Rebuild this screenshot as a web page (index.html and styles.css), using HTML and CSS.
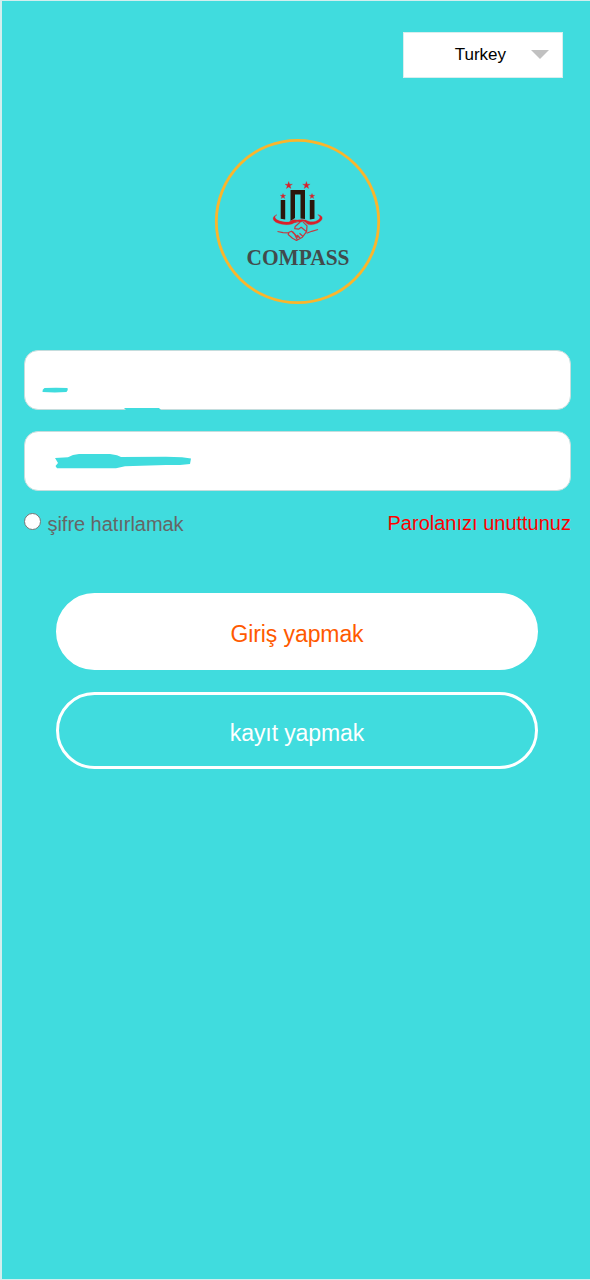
FILE: index.html
```html
<!DOCTYPE html>
<html lang="tr">
<head>
<meta charset="utf-8">
<meta name="viewport" content="width=device-width, initial-scale=1">
<title>Compass</title>
<link rel="stylesheet" href="styles.css">
</head>
<body>
<main class="page">
  <header class="top">
    <button class="language" type="button">
      <span>Turkey</span>
      <svg class="caret" viewBox="0 0 18 9"><path d="M0 0H18L9 9Z"/></svg>
    </button>
  </header>

  <svg class="logo" viewBox="214 138 167 167" role="img" aria-label="Compass">
    <circle class="ring" cx="297.5" cy="221.5" r="81.2"/>
    <g class="towers">
      <path d="M290.5 190H305V219L300.5 218.5V194.5H295V218L290.5 221Z"/>
      <path d="M280.7 200H285.2V219.5L280.7 218.8Z"/>
      <path d="M309.8 200H314.5V218.8L309.8 219.6Z"/>
    </g>
    <g class="red">
      <path d="M288.7 181.5L289.6 184.2H292.4L290.1 185.8L291 188.5L288.7 186.9L286.4 188.5L287.3 185.8L285 184.2H287.8Z"/>
      <path d="M306.4 181.5L307.3 184.2H310.1L307.8 185.8L308.7 188.5L306.4 186.9L304.1 188.5L305 185.8L302.7 184.2H305.5Z"/>
      <path d="M283 193.5L283.7 195.3H285.7L284.1 196.5L284.7 198.5L283 197.3L281.3 198.5L281.9 196.5L280.3 195.3H282.3Z"/>
      <path d="M312 193.5L312.7 195.3H314.7L313.1 196.5L313.7 198.5L312 197.3L310.3 198.5L310.9 196.5L309.3 195.3H311.3Z"/>
      <path d="M277 214.7C271.5 216.3 272 220.8 277.8 223.1C282.5 225 288.4 225.1 292 224L297.3 221.3L300.2 222.3L303.5 221.2C306 221.8 306 223.7 309 224.6C314 225.3 319.5 223 321.7 219.8C323.5 216.6 320.2 214.8 317.7 214.7C321.5 216.8 320 219.6 315.8 221.2C311.8 222.5 308.5 221.8 305.8 220.1L302 219.6L297.4 220L293 219.7L288.8 222C283.8 222.5 276.8 220.8 275.2 218.1C274.6 216.8 275.4 215.5 277 214.7Z"/>
    </g>
    <g class="hands">
      <path d="M294 222.5L299 221.5M303 221.8L307 225.8L306.6 231.7L302.4 237.2L296.5 240.5L292.5 238.2L288.2 234.5L289 232.2L291.5 231.2L294.6 234.2L297.4 240M300 222.2L295.2 226.5L294.7 228.7L298.5 229.2L301.2 227.3L306.6 231.7M291.5 231.2L293.1 232.1L298 237.6M299.5 233.2L302.5 236M297.2 235L300 238"/>
      <path d="M277.5 231.5L283 232.6L289 232.8M318 229.5L311.7 231.3L306.6 233.2"/>
    </g>
    <text class="wordmark" x="246.5" y="265.3" textLength="103" lengthAdjust="spacingAndGlyphs">COMPASS</text>
  </svg>

  <form class="login">
    <div class="field field-user">
      <svg class="smudge" viewBox="24 350 547 60">
        <path d="M44.5 388Q56 387.3 67.5 388Q68.5 390 66.5 392Q55 392.8 42.5 392Q42 389.5 44.5 388Z"/>
        <path d="M124 408H159L161 410H126Z"/>
      </svg>
    </div>
    <div class="field field-password">
      <svg class="smudge" viewBox="24 431 547 60">
        <path d="M55 458L68 457.2L73 455L79 454H110L117 455.3L121 457L166 456.7L182 457.3L191 458.5L190 464L180 465L166 465L125 466.3L116 468.3H57L55.5 466L58 463Z"/>
      </svg>
    </div>
    <div class="options">
      <label class="remember"><span class="radio"></span><span class="remember-text">şifre hatırlamak</span></label>
      <a class="forgot">Parolanızı unuttunuz</a>
    </div>
    <div class="actions">
      <button class="button solid" type="button">Giriş yapmak</button>
      <button class="button outline" type="button">kayıt yapmak</button>
    </div>
  </form>
</main>
</body>
</html>
```
FILE: styles.css
```css
* {
  box-sizing: border-box;
}

body {
  margin: 0;
  font-family: "Liberation Sans", Arial, sans-serif;
}

.page {
  display: flex;
  flex-direction: column;
  height: 1280px;
  padding: 31px 19px 0 22px;
  border: 1px solid #d3eeee;
  border-left-width: 2px;
  border-right: 0;
  background: #40dcde;
}

.top {
  display: flex;
  justify-content: flex-end;
  padding-right: 8px;
}

.language {
  display: flex;
  align-items: center;
  justify-content: flex-end;
  gap: 25px;
  width: 160px;
  height: 46px;
  padding: 0 13px 0 0;
  border: 1px solid #d8eeee;
  background: #fff;
  color: #000;
  font: 17px "Liberation Sans", Arial, sans-serif;
}

.caret {
  width: 18px;
  height: 9px;
  margin-bottom: 1px;
  fill: #c1c1c1;
}

.logo {
  width: 167px;
  height: 167px;
  margin: 60px 0 0 190px;
}

.ring {
  fill: none;
  stroke: #fbb52c;
  stroke-width: 2.8;
}

.towers {
  fill: #2c160c;
}

.red {
  fill: #d9202a;
  stroke: #d9202a;
  stroke-width: 0.3;
}

.hands {
  fill: none;
  stroke: #c33a40;
  stroke-width: 1.2;
  stroke-linejoin: round;
}

.wordmark {
  fill: #424b4c;
  font: bold 24px "Liberation Serif", serif;
}

.login {
  display: flex;
  flex-direction: column;
  margin-top: 45px;
}

.field {
  width: 547px;
  height: 60px;
  margin-bottom: 21px;
  border: 1px solid #c4dddd;
  border-radius: 14px;
  background: #fff;
}

.field-password {
  margin-bottom: 0;
}

.smudge {
  display: block;
  width: 547px;
  height: 60px;
  margin: -1px;
  fill: #40dcde;
}

.options {
  display: flex;
  justify-content: space-between;
  height: 62px;
  margin-top: 20px;
  font-size: 20px;
  line-height: 24px;
}

.remember {
  display: flex;
  color: #666;
}

.radio {
  width: 17px;
  height: 17px;
  margin: 2px 6.5px 0 0;
  border: 1.5px solid #767676;
  border-radius: 50%;
  background: #fff;
}

.remember-text {
  padding-top: 1px;
  letter-spacing: -0.04px;
}

.forgot {
  color: #f00;
}

.actions {
  display: flex;
  flex-direction: column;
  gap: 22px;
  margin: 20px 33px 0 32px;
}

.button {
  height: 77px;
  padding: 5px 0 0;
  border: 3px solid #fff;
  border-radius: 39px;
  font: 23px "Liberation Sans", Arial, sans-serif;
  letter-spacing: -0.1px;
}

.solid {
  background: #fff;
  color: #ff5a00;
}

.outline {
  background: transparent;
  color: #fff;
}
```
